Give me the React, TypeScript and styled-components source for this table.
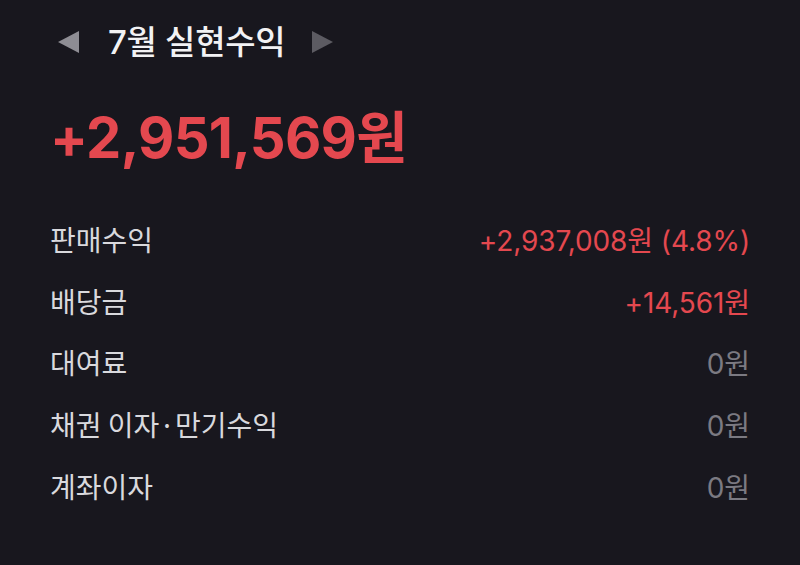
import React from "react";
import styled, { createGlobalStyle } from "styled-components";

const Global = createGlobalStyle`
  html, body { margin: 0; padding: 0; background: #18171e; }
  body { font-family: Inter, "Noto Sans CJK KR", sans-serif; }
`;

const FONT = `Inter, "Noto Sans CJK KR", sans-serif`;

const Page = styled.div`
  width: 800px;
  height: 565px;
  background: #18171e;
  box-sizing: border-box;
  padding: 16px 50px 0 50px;
  display: flex;
  flex-direction: column;
  overflow: hidden;
`;

const Header = styled.div`
  display: flex;
  align-items: center;
  height: 52px;
`;

const Arrow = styled.span<{ $dir: "left" | "right" }>`
  display: block;
  width: 0;
  height: 0;
  border-top: 11px solid transparent;
  border-bottom: 11px solid transparent;
  ${(p) =>
    p.$dir === "left"
      ? `border-right: 21px solid #8e8d94; margin-left: 8px;`
      : `border-left: 21px solid #5c5b62;`}
`;

const Title = styled.h1`
  margin: 0 27px 0 29px;
  font-family: ${FONT};
  font-size: 33px;
  font-weight: 500;
  color: #f2f2f4;
  letter-spacing: -0.3px;
  line-height: 52px;
`;

const Total = styled.div`
  margin-top: 35px;
  font-family: ${FONT};
  font-size: 56px;
  font-weight: 700;
  color: #e4484f;
  letter-spacing: -0.7px;
  line-height: 70px;
`;

const List = styled.div`
  margin-top: 35px;
  display: flex;
  flex-direction: column;
`;

const Row = styled.div`
  display: flex;
  justify-content: space-between;
  align-items: center;
  height: 61.7px;
`;

const Label = styled.span`
  font-family: "Noto Sans CJK KR", Inter, sans-serif;
  font-size: 28px;
  color: #d9d9dd;
`;

const Value = styled.span<{ $tone: "red" | "gray" }>`
  font-family: ${FONT};
  font-size: 28px;
  color: ${(p) => (p.$tone === "red" ? "#e4484f" : "#7b7a82")};
  letter-spacing: -0.1px;
`;

const rows: { label: string; value: string; tone: "red" | "gray" }[] = [
  { label: "판매수익", value: "+2,937,008원 (4.8%)", tone: "red" },
  { label: "배당금", value: "+14,561원", tone: "red" },
  { label: "대여료", value: "0원", tone: "gray" },
  { label: "채권 이자·만기수익", value: "0원", tone: "gray" },
  { label: "계좌이자", value: "0원", tone: "gray" },
];

export default function App() {
  return (
    <>
      <Global />
      <Page>
        <Header>
          <Arrow $dir="left" />
          <Title>7월 실현수익</Title>
          <Arrow $dir="right" />
        </Header>
        <Total>+2,951,569원</Total>
        <List>
          {rows.map((r) => (
            <Row key={r.label}>
              <Label>{r.label}</Label>
              <Value $tone={r.tone}>{r.value}</Value>
            </Row>
          ))}
        </List>
      </Page>
    </>
  );
}
